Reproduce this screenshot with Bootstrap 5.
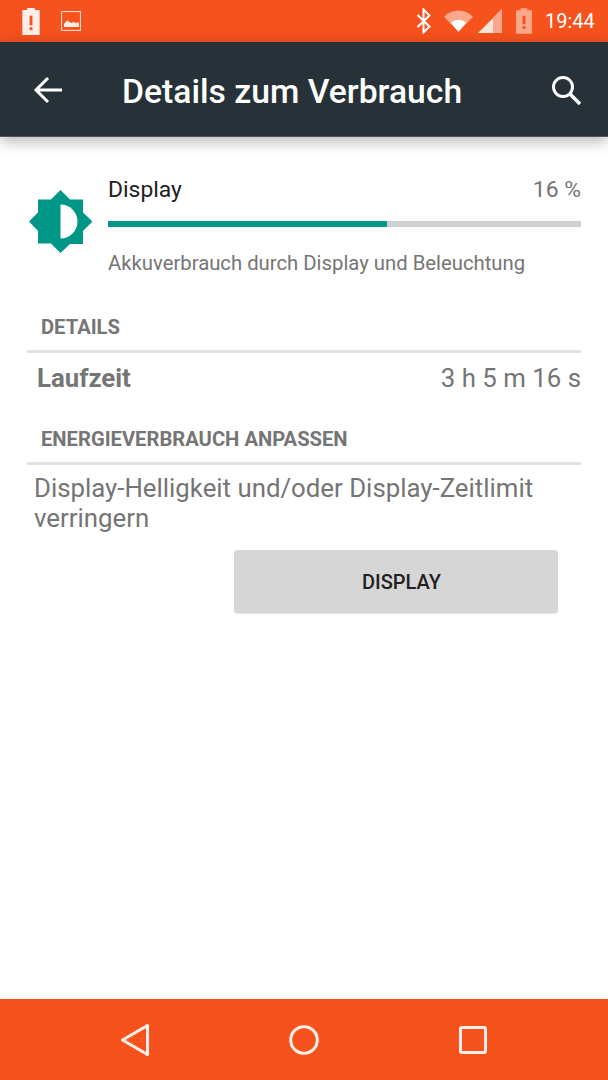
<!DOCTYPE html>
<html lang="de">
<head>
  <meta charset="UTF-8"/>
  <meta name="viewport" content="width=device-width, initial-scale=1.0"/>
  <title>Details zum Verbrauch</title>
  <link href="https://cdn.jsdelivr.net/npm/bootstrap@5.3.0/dist/css/bootstrap.min.css" rel="stylesheet"/>
  <style>
    html, body { height: 1080px; overflow: hidden; }
    body { font-family: Roboto, sans-serif; background: #fff; color: #757575; }
    .phone { height: 1080px; }
    .status-strip { height: 42px; background: #f5521d; padding: 0 13px 0 22px; color: #fff; }
    .status-time { font-size: 20px; line-height: 1; width: 50px; margin-left: 13px; }
    .image-glyph { margin-left: 21px; }
    .wifi-glyph { margin-left: 12px; }
    .signal-glyph { margin-left: 5px; }
    .battery-glyph { margin-left: 14px; }
    .app-bar { height: 95px; background: #263238; color: #fff; padding: 2px 27px 0 33px; box-shadow: 0 4px 14px rgba(0,0,0,.3); position: relative; border-bottom: 1px solid #4b565c; }
    .app-title { font-size: 33.7px; font-weight: 500; line-height: 1; margin: 3px 0 0 59px; }
    .page-body { padding: 0 27px; }
    .usage-row { padding: 40px 0 0 2px; }
    .usage-icon { width: 63px; height: 63px; margin-top: 13px; margin-right: 16px; }
    .usage-name { font-size: 22.9px; line-height: 25px; color: #212121; }
    .usage-pct { font-size: 22.9px; line-height: 25px; color: #757575; }
    .usage-track { height: 6px; background: #d0d0d0; margin-top: 19px; }
    .usage-fill { height: 6px; background: #009688; }
    .usage-desc { font-size: 20.3px; line-height: 24px; margin-top: 24px; color: #757575; }
    .group-head { font-size: 20.2px; font-weight: 700; line-height: 24px; padding-left: 14px; color: #757575; border-bottom: 3px solid #e2e2e2; padding-bottom: 11px; }
    .details-head { margin-top: 40px; }
    .run-row { padding: 0 0 0 10px; height: 50px; color: #757575; font-size: 25.8px; }
    .run-row b { font-weight: 700; }
    .tips-head { margin-top: 24px; }
    .tip-text { font-size: 25.8px; line-height: 30px; padding: 8px 0 0 7px; color: #757575; }
    .display-btn { width: 324px; height: 63px; background: #d6d6d6; border: 0; border-radius: 4px; color: #212121; font-size: 20px; font-weight: 500; padding: 0 0 0 11px; margin: 17px 23px 0 0; box-shadow: 0 1px 1px rgba(0,0,0,.12); }
    .nav-strip { height: 81px; background: #f5521d; }
    .nav-slot { width: 169px; }
  </style>
</head>
<body>
  <div class="phone d-flex flex-column">
    <!-- status bar -->
    <div class="status-strip d-flex align-items-center flex-shrink-0">
      <svg width="18" height="27" viewBox="0 0 18 28"><path fill="#fdeee8" d="M5 0h8v2h5v26H0V2h5z"/><rect x="7.500" y="8" width="3" height="10" fill="#f5521d"/><rect x="7.500" y="20" width="3" height="3" fill="#f5521d"/></svg>
      <svg class="image-glyph" width="20" height="20" viewBox="0 0 20 20"><rect x=".5" y=".5" width="19" height="19" fill="none" stroke="#fdd9cc" stroke-width="1.200"/><path fill="#fdeee8" d="M3 16v-3l3-3.500 2 1 2 1.500 3-1 2 1 2-1 1 1.500V16z"/></svg>
      <div class="ms-auto d-flex align-items-center">
        <svg width="16" height="26" viewBox="0 0 16 26"><path fill="none" stroke="#fff" stroke-width="2" d="M1.500 7l12 11.500-6 6V1.500l6 6-12 11.500"/></svg>
        <svg class="wifi-glyph" width="29" height="22" viewBox="0 0 30 22"><path fill="#fba78b" d="M0 6.500C8-2 22-2 30 6.500L15 22z"/><path fill="#fff" d="M7 12.800c5-4 11-4 16 0L15 22z"/></svg>
        <svg class="signal-glyph" width="24" height="24" viewBox="0 0 24 24"><path fill="#fde4da" d="M24 0v24H0z"/><path fill="#fba78b" d="M15 9l9-9v24h-9z"/></svg>
        <svg class="battery-glyph" width="16" height="26" viewBox="0 0 17 27"><path fill="#fba78b" d="M5 0h7v2h5v25H0V2h5z"/><rect x="7" y="8" width="3" height="9" fill="#f5521d"/><rect x="7" y="19" width="3" height="3" fill="#f5521d"/></svg>
        <span class="status-time">19:44</span>
      </div>
    </div>

    <!-- toolbar -->
    <div class="app-bar d-flex align-items-center flex-shrink-0">
      <svg width="30" height="28" viewBox="0 0 30 28"><path fill="none" stroke="#fff" stroke-width="3" d="M29 14H3M15 2L3 14l12 12"/></svg>
      <h1 class="app-title">Details zum Verbrauch</h1>
      <svg class="ms-auto" width="30" height="30" viewBox="0 0 30 30"><circle cx="12" cy="12" r="9.500" fill="none" stroke="#fff" stroke-width="3"/><path stroke="#fff" stroke-width="3.500" d="M18.500 18.500L29 29"/></svg>
    </div>

    <!-- content -->
    <div class="page-body flex-grow-1">
      <div class="usage-row d-flex">
        <svg class="usage-icon flex-shrink-0" viewBox="0 0 63 63">
          <path fill="#009688" d="M31.500 0l9.500 9.500h13v13l9.500 9-9.500 9.500v13H41L31.500 63 22 53.500H9V41l-9-9.500 9-9v-13h13z"/>
          <path fill="#fff" d="M31.500 14.500a17 17 0 0 1 0 34z"/>
        </svg>
        <div class="flex-grow-1">
          <div class="d-flex justify-content-between">
            <span class="usage-name">Display</span>
            <span class="usage-pct">16 %</span>
          </div>
          <div class="usage-track"><div class="usage-fill" style="width:59%"></div></div>
          <div class="usage-desc">Akkuverbrauch durch Display und Beleuchtung</div>
        </div>
      </div>

      <div class="group-head details-head">DETAILS</div>
      <div class="run-row d-flex justify-content-between align-items-center">
        <b>Laufzeit</b>
        <span>3 h 5 m 16 s</span>
      </div>

      <div class="group-head tips-head">ENERGIEVERBRAUCH ANPASSEN</div>
      <div class="tip-text">Display-Helligkeit und/oder Display-Zeitlimit verringern</div>
      <div class="d-flex justify-content-end">
        <button type="button" class="btn display-btn">DISPLAY</button>
      </div>
    </div>

    <!-- nav bar -->
    <div class="nav-strip d-flex justify-content-center align-items-center flex-shrink-0">
      <div class="nav-slot d-flex justify-content-center">
        <svg width="30" height="34" viewBox="0 0 30 34"><path fill="none" stroke="#fdf0ea" stroke-width="3" stroke-linejoin="round" d="M27.500 2.500v29L2.500 17z"/></svg>
      </div>
      <div class="nav-slot d-flex justify-content-center">
        <svg width="30" height="30" viewBox="0 0 30 30"><circle cx="15" cy="15" r="13.300" fill="none" stroke="#fdf0ea" stroke-width="3"/></svg>
      </div>
      <div class="nav-slot d-flex justify-content-center">
        <svg width="28" height="28" viewBox="0 0 28 28"><rect x="1.500" y="1.500" width="25" height="25" rx="1.500" fill="none" stroke="#fdf0ea" stroke-width="3"/></svg>
      </div>
    </div>
  </div>
  <script src="https://cdn.jsdelivr.net/npm/bootstrap@5.3.0/dist/js/bootstrap.bundle.min.js"></script>
</body>
</html>
